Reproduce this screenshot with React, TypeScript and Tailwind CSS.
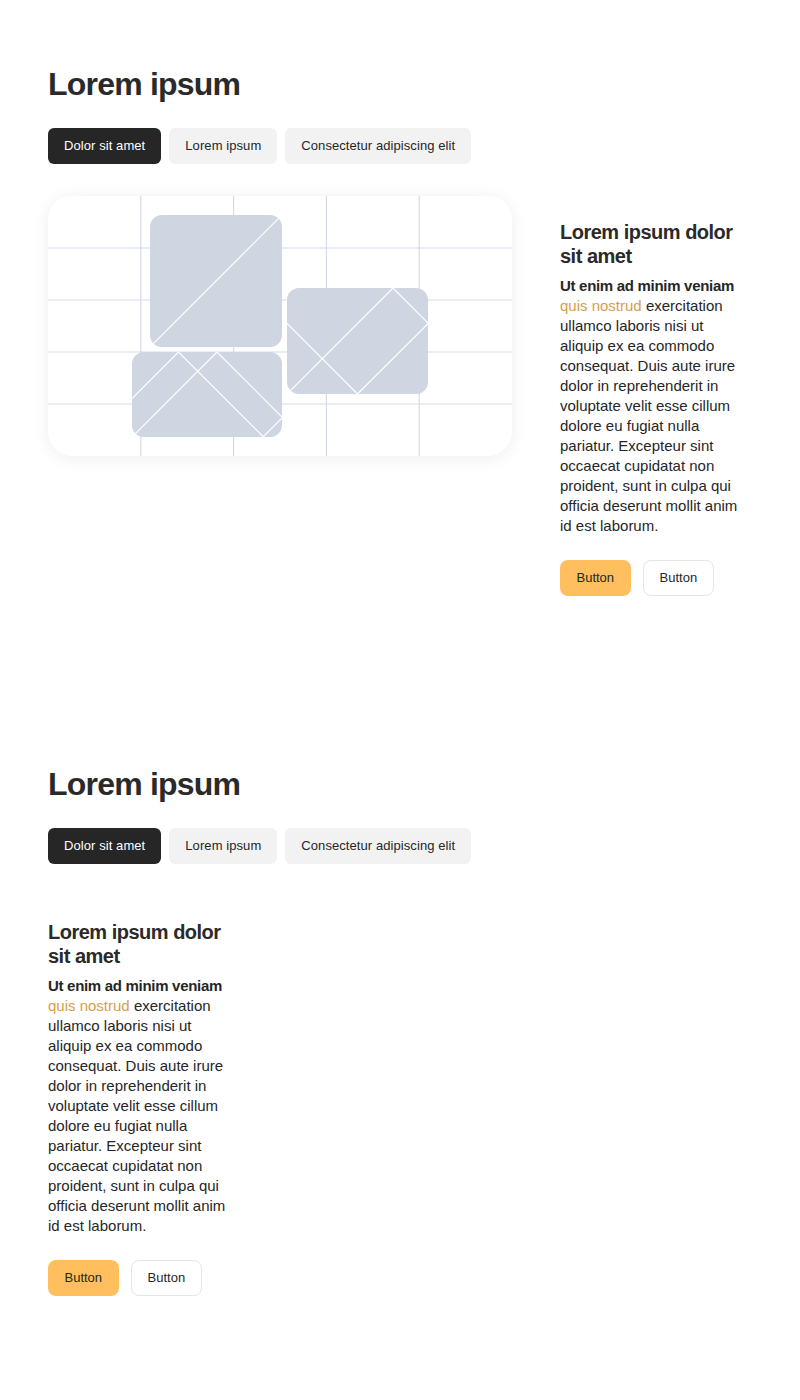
import React from "react";

function Illustration() {
  const vx = [92.8, 185.6, 278.4, 371.2];
  const hy = [52, 104, 156, 208];
  return (
    <svg width="464" height="260" viewBox="0 0 464 260" className="block">
      <defs>
        <clipPath id="r1">
          <rect x="102" y="19" width="132" height="132" rx="12" />
        </clipPath>
        <clipPath id="r2">
          <rect x="84" y="156" width="150" height="85" rx="12" />
        </clipPath>
        <clipPath id="r3">
          <rect x="239" y="92" width="141" height="106" rx="12" />
        </clipPath>
      </defs>
      {vx.map((x) => (
        <line key={"v" + x} x1={x} y1="0" x2={x} y2="260" stroke="#d6dbe8" strokeWidth="1.2" />
      ))}
      {hy.map((y) => (
        <line key={"h" + y} x1="0" y1={y} x2="464" y2={y} stroke="#d6dbe8" strokeWidth="1.2" />
      ))}
      <g clipPath="url(#r1)">
        <rect x="102" y="19" width="132" height="132" fill="#cfd6e2" />
        <line x1="102" y1="151" x2="234" y2="19" stroke="#ffffff" strokeWidth="1.2" />
      </g>
      <g clipPath="url(#r2)">
        <rect x="84" y="156" width="150" height="85" fill="#cfd6e2" />
        <g transform="translate(84 156)" stroke="#ffffff" strokeWidth="1.2">
          <line x1="0" y1="46.5" x2="46.5" y2="0" />
          <line x1="0" y1="85" x2="85" y2="0" />
          <line x1="131" y1="85" x2="151" y2="65" />
          <line x1="46.5" y1="0" x2="131.5" y2="85" />
          <line x1="85" y1="0" x2="150" y2="65" />
        </g>
      </g>
      <g clipPath="url(#r3)">
        <rect x="239" y="92" width="141" height="106" fill="#cfd6e2" />
        <g transform="translate(239 92)" stroke="#ffffff" strokeWidth="1.2">
          <line x1="0" y1="35.3" x2="70.5" y2="106" />
          <line x1="0" y1="106" x2="106" y2="0" />
          <line x1="106" y1="0" x2="141.3" y2="35.3" />
          <line x1="70.5" y1="106" x2="141.3" y2="35.3" />
        </g>
      </g>
    </svg>
  );
}

function TextColumn() {
  return (
    <div className="w-[188px] shrink-0 pt-6">
      <h2 className="text-[20px] leading-6 font-bold tracking-[-0.025em] text-[#2a2a2a]">
        Lorem ipsum dolor sit amet
      </h2>
      <p className="mt-2 text-[15px] leading-5 text-[#262626]">
        <span className="font-bold tracking-[-0.02em]">Ut enim ad minim veniam</span>{" "}
        <span className="text-[#d69d4c]">quis nostrud</span> exercitation ullamco laboris nisi ut
        aliquip ex ea commodo consequat. Duis aute irure dolor in reprehenderit in voluptate velit
        esse cillum dolore eu fugiat nulla pariatur. Excepteur sint occaecat cupidatat non
        proident, sunt in culpa qui officia deserunt mollit anim id est laborum.
      </p>
      <div className="mt-6 flex gap-3">
        <button className="h-9 px-[16.5px] rounded-lg bg-[#ffbf5e] text-[13px] text-[#262626]">
          Button
        </button>
        <button className="h-9 px-4 rounded-lg bg-white border border-[#e5e5e5] text-[13px] text-[#262626]">
          Button
        </button>
      </div>
    </div>
  );
}

function Tabs() {
  return (
    <div className="mt-6 flex gap-2">
      <div className="h-9 px-4 flex items-center rounded-md bg-[#262626] text-white text-[13px] tracking-[0.006em]">
        Dolor sit amet
      </div>
      <div className="h-9 px-4 flex items-center rounded-md bg-[#f2f2f2] text-[#262626] text-[13px] tracking-[0.006em]">
        Lorem ipsum
      </div>
      <div className="h-9 px-4 flex items-center rounded-md bg-[#f2f2f2] text-[#262626] text-[13px] tracking-[0.006em]">
        Consectetur adipiscing elit
      </div>
    </div>
  );
}

function Section({ withCard }: { withCard: boolean }) {
  return (
    <section className="px-12 pt-16 pb-[104px]">
      <h1 className="text-[32px] leading-10 font-bold tracking-[-0.025em] text-[#2a2a2a]">
        Lorem ipsum
      </h1>
      <Tabs />
      <div className="mt-8 flex gap-12 items-start">
        {withCard && (
          <div className="w-[464px] h-[260px] shrink-0 rounded-3xl overflow-hidden bg-white shadow-[0_2px_18px_rgba(0,0,0,0.07)]">
            <Illustration />
          </div>
        )}
        <TextColumn />
      </div>
    </section>
  );
}

export default function App() {
  return (
    <div className="w-[800px] bg-white font-['Liberation_Sans',Arial,sans-serif]">
      <Section withCard={true} />
      <Section withCard={false} />
    </div>
  );
}
